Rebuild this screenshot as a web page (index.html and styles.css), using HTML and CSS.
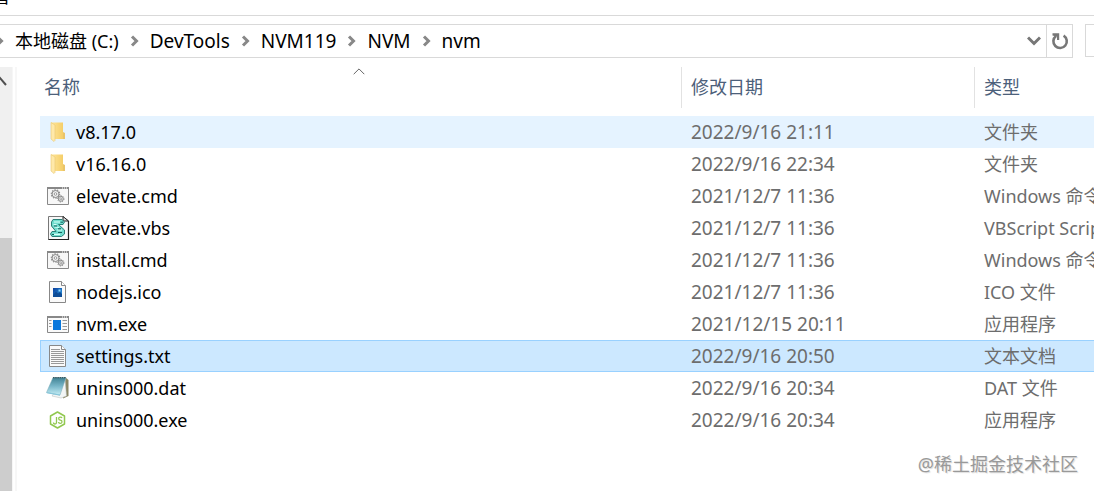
FILE: index.html
```html
<!DOCTYPE html>
<html lang="zh-CN">
<head>
<meta charset="utf-8">
<title>nvm</title>
<link rel="stylesheet" href="styles.css">
</head>
<body>
<div class="window">
  <div class="ribbon"><button class="ribbon-tab" type="button">查看</button></div>

  <div class="toolbar">
    <div class="address">
      <nav class="crumbs" aria-label="路径">
        <svg class="sep" viewBox="0 0 8 12"><path d="M1.5 1.5 6 6 1.5 10.5"/></svg>
        <a class="drive" href="#">本地磁盘 (C:)</a>
        <svg class="sep" viewBox="0 0 8 12"><path d="M1.5 1.5 6 6 1.5 10.5"/></svg>
        <a href="#">DevTools</a>
        <svg class="sep" viewBox="0 0 8 12"><path d="M1.5 1.5 6 6 1.5 10.5"/></svg>
        <a href="#">NVM119</a>
        <svg class="sep" viewBox="0 0 8 12"><path d="M1.5 1.5 6 6 1.5 10.5"/></svg>
        <a href="#">NVM</a>
        <svg class="sep" viewBox="0 0 8 12"><path d="M1.5 1.5 6 6 1.5 10.5"/></svg>
        <a href="#">nvm</a>
      </nav>
      <button class="history" type="button" aria-label="以前的位置">
        <svg width="14" height="10" viewBox="0 0 14 10"><path d="M1 1.5 7 7.5 13 1.5" fill="none" stroke="#777" stroke-width="3"/></svg>
      </button>
      <button class="refresh" type="button" aria-label="刷新">
        <svg width="18" height="18" viewBox="0 0 18 18"><path d="M12.6 3.6A6.700 6.700 0 1 1 5 4" fill="none" stroke="#777" stroke-width="2.600"/><path d="M1.500 1.200H8.200V8H6V4.800L1.500 3.400Z" fill="#777"/></svg>
      </button>
    </div>
    <input class="search" type="text" aria-label="搜索">
  </div>

  <div class="body">
    <div class="scroll">
      <svg class="scroll-up" width="7" height="12" viewBox="0 0 7 12"><path d="M-4 9 0 2 6 9" fill="none" stroke="#505050" stroke-width="2"/></svg>
      <div class="thumb"></div>
    </div>
    <main class="files">
      <table>
        <colgroup><col class="c-name"><col class="c-date"><col></colgroup>
        <thead>
          <tr>
            <th scope="col">名称<svg class="sort" width="12" height="7" viewBox="0 0 12 7"><path d="M.7 6.2 6 .9 11.3 6.2" fill="none" stroke="#666"/></svg></th>
            <th scope="col">修改日期</th>
            <th scope="col">类型</th>
          </tr>
        </thead>
        <tbody>
          <tr class="hover"><td><div class="name"><svg class="ico" viewBox="0 0 24 24"><use href="#folder"/></svg>v8.17.0</div></td><td class="date">2022/9/16 21:11</td><td>文件夹</td></tr>
          <tr><td><div class="name"><svg class="ico" viewBox="0 0 24 24"><use href="#folder"/></svg>v16.16.0</div></td><td class="date">2022/9/16 22:34</td><td>文件夹</td></tr>
          <tr><td><div class="name"><svg class="ico" viewBox="0 0 24 24"><use href="#cmd"/></svg>elevate.cmd</div></td><td class="date">2021/12/7 11:36</td><td>Windows 命令脚本</td></tr>
          <tr><td><div class="name"><svg class="ico" viewBox="0 0 24 24"><use href="#vbs"/></svg>elevate.vbs</div></td><td class="date">2021/12/7 11:36</td><td>VBScript Script 文件</td></tr>
          <tr><td><div class="name"><svg class="ico" viewBox="0 0 24 24"><use href="#cmd"/></svg>install.cmd</div></td><td class="date">2021/12/7 11:36</td><td>Windows 命令脚本</td></tr>
          <tr><td><div class="name"><svg class="ico" viewBox="0 0 24 24"><use href="#image"/></svg>nodejs.ico</div></td><td class="date">2021/12/7 11:36</td><td>ICO 文件</td></tr>
          <tr><td><div class="name"><svg class="ico" viewBox="0 0 24 24"><use href="#app"/></svg>nvm.exe</div></td><td class="date">2021/12/15 20:11</td><td>应用程序</td></tr>
          <tr class="selected"><td><div class="name"><svg class="ico" viewBox="0 0 24 24"><use href="#text"/></svg>settings.txt</div></td><td class="date">2022/9/16 20:50</td><td>文本文档</td></tr>
          <tr><td><div class="name"><svg class="ico" viewBox="0 0 24 24"><use href="#dat"/></svg>unins000.dat</div></td><td class="date">2022/9/16 20:34</td><td>DAT 文件</td></tr>
          <tr><td><div class="name"><svg class="ico" viewBox="0 0 24 24"><use href="#node"/></svg>unins000.exe</div></td><td class="date">2022/9/16 20:34</td><td>应用程序</td></tr>
        </tbody>
      </table>
    </main>
  </div>
  <div class="watermark">@稀土掘金技术社区</div>
</div>

<svg class="defs" aria-hidden="true">
  <defs>
    <linearGradient id="gold" x1="0" x2="1"><stop offset="0" stop-color="#ffe69b"/><stop offset="1" stop-color="#f3ca60"/></linearGradient>
    <linearGradient id="teal" x1="0" y1="0" x2="0" y2="1"><stop offset="0" stop-color="#3f8193"/><stop offset=".5" stop-color="#79b7c9"/><stop offset="1" stop-color="#c4edf5"/></linearGradient>
    <linearGradient id="sky" x1="0" y1="0" x2="1" y2="1"><stop offset="0" stop-color="#0b3d9a"/><stop offset="1" stop-color="#2a9be4"/></linearGradient>
    <symbol id="folder" viewBox="0 0 24 24">
      <path d="M5 2.5H17V17.5H19V19H5Z" fill="url(#gold)"/><path d="M17 12 19 13V19H17Z" fill="#e9c46a"/>
      <path d="M5 2.5 9 5V20.5L8 21.5 5 19Z" fill="#ffe9a9" stroke="#e7c873" stroke-width=".6"/>
    </symbol>
    <symbol id="cmd" viewBox="0 0 24 24">
      <path d="M1.5 3.5H22.5V20.5H1.5Z" fill="#f7f7f7" stroke="#888"/><path d="M1 3H23V5H1Z" fill="#888"/>
      <path d="M16 4H17M18 4H19M20 4H21" stroke="#fff"/>
      <circle cx="9.500" cy="10" r="3.500" fill="#eee" stroke="#8b8b8b" stroke-width="1"/><circle cx="9.500" cy="10" r="4.200" fill="none" stroke="#8b8b8b" stroke-width="1.200" stroke-dasharray="1.300 1.300"/><circle cx="9.500" cy="10" r="1.300" fill="#fff" stroke="#888" stroke-width=".8"/>
      <circle cx="14.800" cy="14.800" r="2.500" fill="#eee" stroke="#8b8b8b" stroke-width="1"/><circle cx="14.800" cy="14.800" r="3.200" fill="none" stroke="#8b8b8b" stroke-width="1" stroke-dasharray="1.200 1.200"/><circle cx="14.800" cy="14.800" r="1" fill="#fff" stroke="#888" stroke-width=".8"/>
    </symbol>
    <symbol id="vbs" viewBox="0 0 24 24">
      <path d="M2.500 .5H17L22.500 5V23.500H2.500Z" fill="#f8f8f8" stroke="#777"/><path d="M22.500 5V23.500H2.500" fill="none" stroke="#222" stroke-width="1.200"/><path d="M17 .5V5H22.500Z" fill="#ddd" stroke="#222"/>
      <path d="M7 3.500H16L18.500 6 17 8.500H12.500L18.500 14V18L15.500 20.500H6L4.500 18 6 15.500H10L5.500 10V6Z" fill="#70dccd" stroke="#2b7f78"/>
      <path d="M8 6H14M7.500 8.500H10.500M8.500 11 13 11.500M11 14H16M8 18.300H14" stroke="#d5fff8" stroke-width="1.200"/><path d="M14.500 6.200H17M8 10H11M12 12.800H15M12 16.500H16M6 18.500H8" stroke="#145f5b"/>
    </symbol>
    <symbol id="image" viewBox="0 0 24 24">
      <path d="M3.500 1.500H15.500L19.500 5.500V22.500H3.500Z" fill="#fafafa" stroke="#888"/><path d="M15.500 1.500V5.500H19.500" fill="#fff" stroke="#888"/>
      <path d="M7 8H16V17H7Z" fill="url(#sky)"/><path d="M7 15 10 11.500 12 13.500 14 12 16 14V17H7Z" fill="#0d4c96"/><path d="M12.500 9.500H14.500V11.500H12.500Z" fill="#8fdcff"/>
    </symbol>
    <symbol id="app" viewBox="0 0 24 24">
      <path d="M1.500 4.500H22.500V20.500H1.500Z" fill="#fafafa" stroke="#888"/><path d="M1 4H23V6H1Z" fill="#888"/><path d="M16 5H17M18 5H19M20 5H21" stroke="#fff"/>
      <path d="M7 8H15V18H7Z" fill="#0877dc"/><path d="M3 8.500H5.500M3 11.500H5.500M3 14.500H5.500M16.500 8.500H21M16.500 11.500H21M16.500 14.500H21M16.500 17.500H21" stroke="#999"/>
    </symbol>
    <symbol id="text" viewBox="0 0 24 24">
      <path d="M3.500 1.500H15.500L19.500 5.500V22.500H3.500Z" fill="#fafafa" stroke="#888"/><path d="M15.500 1.500V5.500H19.500" fill="#fff" stroke="#888"/>
      <path d="M5 5.500H14M5 7.500H18M5 9.500H18M5 11.500H18M5 13.500H18M5 15.500H18M5 17.500H18M5 19.500H18" stroke="#999"/>
    </symbol>
    <symbol id="dat" viewBox="0 0 24 24">
      <path d="M19.500 1.500 22.500 4V20L17 22.500Z" fill="#8a8664"/><path d="M19 2.500 20.500 20 15 22 6 20Z" fill="#f2f5f5" stroke="#b5bbb9" stroke-width=".5"/>
      <path d="M7 1.500 20 1.500 14 19 .5 16.500Z" fill="url(#teal)" stroke="#77a8b5" stroke-width=".5"/><path d="M7 1.700H20" stroke="#3d5960" stroke-width="1.200" stroke-dasharray="1.500 .7"/><path d="M.7 16.700 14 19.200" stroke="#82c6dc"/>
    </symbol>
    <symbol id="node" viewBox="0 0 24 24">
      <path d="M11.500 4 18.500 8V16L11.500 20 4.500 16V8Z" fill="#fff" stroke="#91c84f" stroke-width="1.500" stroke-linejoin="round"/>
      <path d="M10.500 9V14.500Q10.500 16 9 16T7.500 14.500M16 10Q15.500 9 14 9.200 12.500 9.500 12.700 10.800 13 12 14.300 12.200 16.200 12.500 16 14 15.800 15.400 14.200 15.400 12.700 15.300 12.500 14" fill="none" stroke="#91c84f" stroke-width="1.300"/>
    </symbol>
  </defs>
</svg>
</body>
</html>
```
FILE: styles.css
```css
* { box-sizing: border-box; }
body {
  margin: 0;
  background: #fff;
  color: #000;
  font: 18px/24px "Noto Sans", "Noto Sans CJK SC", sans-serif;
  overflow: hidden;
}
button { border: 0; padding: 0; background: none; font: inherit; }
.window { display: flex; flex-direction: column; height: 100vh; position: relative; }
.defs { position: absolute; width: 0; height: 0; }

.ribbon { height: 16px; overflow: hidden; border-bottom: 1px solid #d9d9d9; }
.ribbon-tab { display: block; margin: -16px 0 0 -26px; white-space: nowrap; }

.toolbar { display: flex; gap: 12px; height: 34px; margin-top: 8px; }
.address { display: flex; flex: 1; border: 1px solid #d9d9d9; border-left: 0; }
.crumbs { display: flex; align-items: center; flex: 1; gap: 11px; margin-left: -5px; font-size: 19px; padding-bottom: 1px; }
.crumbs a { color: #000; text-decoration: none; white-space: nowrap; }
.crumbs .drive { font-size: 18px; }
.sep { width: 9px; height: 12px; flex: none; fill: none; stroke: #888; stroke-width: 3; }
.history { width: 24px; display: grid; place-items: center; }
.refresh { width: 26px; display: grid; place-items: center; border-left: 1px solid #d9d9d9; }
.search { width: 9px; border: 1px solid #d9d9d9; border-right: 0; padding: 0; height: 33px; }

.body { display: flex; flex: 1; min-height: 0; margin-top: 9px; }
.scroll { display: flex; flex-direction: column; width: 13px; flex: none; background: #f0f0f0; border-right: 1px solid #f6f6f6; }
.scroll-up { flex: none; margin: 9px 0 150px; }
.thumb { flex: 1; background: #cdcdcd; }
.files { flex: 1; min-width: 0; overflow: hidden; margin-left: 2px; border-left: 2px solid #f7f7f7; padding-left: 23px; }

table { width: 100%; table-layout: fixed; border-collapse: separate; border-spacing: 0; }
.c-name { width: 641px; }
.c-date { width: 293px; }
th {
  position: relative;
  height: 41px;
  padding: 0 0 2px 9px;
  border-left: 1px solid #e2e2e2;
  color: #4c607a;
  font-weight: 400;
  text-align: left;
}
th:first-child { border-left: 0; padding-left: 4px; }
.sort { position: absolute; left: 50%; top: 1px; margin-left: -8px; }
thead::after { content: ""; display: block; height: 8px; }
td { height: 32px; padding: 0 0 0 10px; color: #6d6d6d; white-space: nowrap; }
td:first-child { padding-left: 6px; color: #000; }
.date { font-size: 19px; }
.name { display: flex; align-items: center; gap: 6px; }
.ico { width: 24px; height: 24px; flex: none; }
.hover td { background: #e5f3ff; }
.selected td { background: #cce8ff; box-shadow: inset 0 1px #99d1ff, inset 0 -1px #99d1ff; }
.selected td:first-child { box-shadow: inset 0 1px #99d1ff, inset 0 -1px #99d1ff, inset 1px 0 #99d1ff; }

.watermark { position: absolute; right: 16px; bottom: 15px; color: #999; text-shadow: 1px 1px 1px #ddd; }
```
